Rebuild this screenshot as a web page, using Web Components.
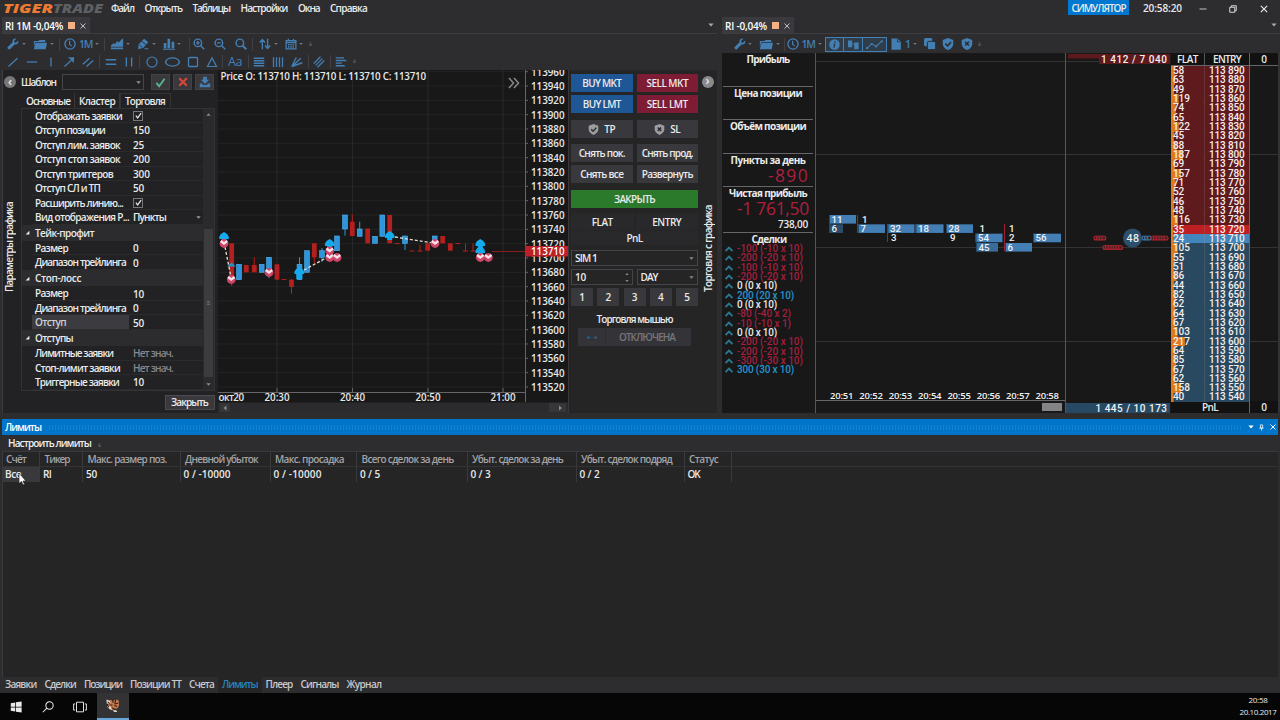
<!DOCTYPE html>
<html lang="ru">
<head>
<meta charset="utf-8">
<title>TigerTrade</title>
<style>
  html, body { margin: 0; height: 100%; overflow: hidden; }
  body {
    font: 600 10px/12px "Open Sans", "Noto Sans", sans-serif;
    color: #eaeaea;
    background: #2d2d30;
    --blue: #447fb4;
    --dark: #181818;
    --panel: #252526;
    --line: #3d3d41;
  }
</style>
</head>
<body>
<trade-app></trade-app>

<script>
const BASE = `<style>
  * { box-sizing: border-box; }
  :host { display: block; box-sizing: border-box; }
</style>`;

// Inline text whose tracking is adjusted so that it takes exactly w pixels
class FitText extends HTMLElement {
  constructor() {
    super();
    this.attachShadow({ mode: 'open' }).innerHTML = `
      <style>:host { display: inline-block; white-space: nowrap; flex: none; }</style><slot></slot>`;
  }
  connectedCallback() {
    const want = parseFloat(this.getAttribute('w'));
    const n = this.textContent.length;
    if (!want || !n) return;
    const vertical = getComputedStyle(this).writingMode !== 'horizontal-tb';
    const r = this.getBoundingClientRect();
    const now = vertical ? r.height : r.width;
    this.style.letterSpacing = ((want - now) / n).toFixed(3) + 'px';
  }
}
customElements.define('fit-text', FitText);
const fit = (w, s, cls = '') => `<fit-text class="${cls}" w="${w}">${s}</fit-text>`;

const ICONS = {
  wrench: '<path fill="currentColor" d="M14.8 3.4 12 6.2 9.8 5.9 9.6 3.8 12.4 1C9.8.2 6.6 2 7.4 5.7L1.3 11.6a2 2 0 0 0 2.9 2.9L10.1 8.5c3.6.9 5.8-2.2 4.7-5.1z"/>',
  folder: '<path fill="currentColor" d="M1 3h5L7.5 1.500H14v3H2.5L1 12zM2.800 5.500H16L14.500 15H1z"/>',
  clock: '<circle cx="8" cy="8" r="6.8" fill="none" stroke="currentColor" stroke-width="1.8"/><path d="M7.5 3.5v5l3 2" fill="none" stroke="currentColor" stroke-width="1.6"/>',
  area: '<path fill="currentColor" d="M1 10l3-3 2 1 2-4 2 2 4-5h1v10.5H1zM1 12.5h14V15H1z"/>',
  pencil: '<path fill="currentColor" d="M9.5 1 15 5.5 8.5 13l-7 2L2 8.5zM10 13.5h5V15h-5z"/><path d="M6.5 4.5l5.5 4.5M3 9l4 3.5" stroke="#2d2d30" stroke-width="1.2"/>',
  bars: '<path fill="currentColor" d="M1 6.5h3.5v7H1zM6 1h3.5v12.5H6zM11.5 5H15v8.5h-3.5zM0 14.2h16v1.3H0z"/>',
  zoomin: '<circle cx="6.5" cy="6.5" r="5" fill="none" stroke="currentColor" stroke-width="1.9"/><path d="M10 10l5 5M4 6.5h5M6.5 4v5" stroke="currentColor" stroke-width="1.9"/>',
  zoomout: '<circle cx="6.5" cy="6.5" r="5" fill="none" stroke="currentColor" stroke-width="1.9"/><path d="M10 10l5 5M4 6.5h5" stroke="currentColor" stroke-width="1.9"/>',
  zoom: '<circle cx="6.5" cy="6.5" r="5" fill="none" stroke="currentColor" stroke-width="1.9"/><path d="M10 10l5 5" stroke="currentColor" stroke-width="2.6"/>',
  updown: '<path d="M4.5 15V3M1 6l3.5-4L8 6M11.5 1v12M8 10l3.5 4 3.5-4" fill="none" stroke="currentColor" stroke-width="1.8"/>',
  calendar: '<path d="M1.5 3.5h13v11h-13zM4.5 1v3M11.5 1v3M1.5 6h13" fill="none" stroke="currentColor" stroke-width="1.7"/><path d="M4 9h8M4 12h8" stroke="currentColor" stroke-width="2" stroke-dasharray="2 1"/>',
  line: '<path d="M2 14 14 3" stroke="currentColor" stroke-width="1.6"/>',
  hline: '<path d="M1 8h14" stroke="currentColor" stroke-width="1.7"/>',
  vline: '<path d="M8 2v12" stroke="currentColor" stroke-width="1.7"/>',
  arrow: '<path d="M2 14 13 4" stroke="currentColor" stroke-width="1.6"/><path fill="currentColor" d="M6.5 2 15 1.5 14 10l-2.5-4.500z"/>',
  channel: '<path d="M1 11 10 3M6 14l9-8" stroke="currentColor" stroke-width="1.7"/>',
  hpar: '<path d="M1 5h14M1 11h14" stroke="currentColor" stroke-width="1.8"/>',
  vpar: '<path d="M4.5 2v12M11.5 2v12" stroke="currentColor" stroke-width="1.8"/>',
  circle: '<circle cx="8" cy="8" r="6.7" fill="none" stroke="currentColor" stroke-width="1.6"/>',
  ellipse: '<ellipse cx="8" cy="8" rx="7.3" ry="5.5" fill="none" stroke="currentColor" stroke-width="1.5"/>',
  square: '<rect x="2" y="2" width="12" height="12" rx="1" fill="none" stroke="currentColor" stroke-width="1.7"/>',
  triangle: '<path d="M8 2.5 14 14H2z" fill="none" stroke="currentColor" stroke-width="1.6"/>',
  hlines: '<path d="M1 3h14M1 6.3h14M1 9.6h14M1 13h14" stroke="currentColor" stroke-width="1.8"/>',
  vlines: '<path d="M2 1.5v13M6 1.5v13M10 1.5v13M14 1.5v13" stroke="currentColor" stroke-width="1.7"/>',
  fan: '<path d="M1 14 7 2M1 14 13 3M1 14l14-5" stroke="currentColor" stroke-width="1.8"/>',
  channel3: '<path d="M1 10 10 1M3.5 12.5l9-9M6 15l9-9" stroke="currentColor" stroke-width="1.7"/>',
  left: '<path d="M1 2.5h11M1 6h14M1 9.5h8M1 13h12" stroke="currentColor" stroke-width="1.8"/>',
  info: '<circle cx="8" cy="8" r="7.6" fill="currentColor"/><path d="M9 3 8.5 5M8.2 6.5 7.4 12.5" stroke="#2f3c49" stroke-width="2.2"/>',
  blocks: '<path fill="currentColor" d="M0 2h6v10H0zM9 5h6.5v10H9z"/><path d="M6 6h3v3H6z" fill="currentColor" opacity=".5"/>',
  trend: '<path d="M1 13 5.5 7l4 4L15 3" fill="none" stroke="currentColor" stroke-width="1.2"/><path fill="currentColor" d="M0 12h2v2.5H0zM4.5 6h2v2.5h-2zM8.5 9.5h2V12h-2zM14 2h2v2.5h-2z"/>',
  page: '<path fill="currentColor" d="M2 .5h8L14.5 5v10.5H2z"/><path d="M10 1v4h4" fill="none" stroke="#2d2d30"/>',
  copy: '<rect x="0" y="0" width="11" height="11" rx="2" fill="currentColor"/><rect x="4.5" y="4.5" width="11" height="11" rx="2" fill="currentColor" stroke="#2d2d30" stroke-width="1.3"/>',
  shieldok: '<path fill="currentColor" d="M8 0l7 2.5v6C14.5 12 11.5 14.5 8 16 4.5 14.5 1.5 12 1 8.5v-6z"/><path d="M4.5 7.5l3 3 4.500-5" fill="none" stroke="#2d2d30" stroke-width="2"/>',
  shieldx: '<path fill="currentColor" d="M8 0l7 2.5v6C14.5 12 11.5 14.5 8 16 4.5 14.5 1.5 12 1 8.5v-6z"/><path d="M5.5 5l5 5M10.5 5l-5 5" stroke="#2d2d30" stroke-width="2.2"/>',
  caret: '<path fill="currentColor" d="M1 4h14L8 12z"/>',
  caretup: '<path fill="currentColor" d="M1 12h14L8 4z"/>',
  cross: '<path d="M3 3l10 10M13 3 3 13" stroke="currentColor" stroke-width="1.9"/>',
  check: '<path d="M2 8.5 6 13.5 14 2.5" fill="none" stroke="currentColor" stroke-width="2.7"/>',
  redx: '<path d="M2 2l12 12M14 2 2 14" stroke="#d8453a" stroke-width="3.6"/>',
  download: '<path fill="currentColor" d="M5.5 1h5v4H13.5L8 10.5 2.5 5h3zM1 10h3l1.5 2h5l1.5-2h3v5H1z"/>',
  min: '<path d="M1 8h14" stroke="currentColor" stroke-width="1.6"/>',
  restore: '<path d="M1.5 4.5h10v10h-10zM4.5 4V1.5h10v10H12" fill="none" stroke="currentColor" stroke-width="1.8"/>',
  pin: '<path d="M5.5 2h5v7h-5zM3 9.5h10M8 10v5" fill="none" stroke="currentColor" stroke-width="1.7"/>',
  overflow: '<path fill="currentColor" d="M4 2h8v2H4zM3 8h10l-5 5z"/>',
  win: '<path fill="currentColor" d="M1 3l6-1v5.5H1zM8 1.8 15.5.7v6.8H8zM1 8.5h6V14l-6-1zM8 8.5h7.5v6.8L8 14.2z"/>',
  search: '<circle cx="10" cy="6" r="4.9" fill="none" stroke="currentColor" stroke-width="1.4"/><path d="M6.5 9.5 1 15" stroke="currentColor" stroke-width="1.4"/>',
  task: '<path d="M4 2.5h8v11H4zM2.5 4.5H.7v7h1.8M13.5 4.5h1.8v7h-1.8" fill="none" stroke="currentColor" stroke-width="1.1"/>',
  eyes: '<path fill="#27648f" d="M1 8l3-3v2h2v2H4v2zM15 8l-3-3v2h-2v2h2v2z"/>',
  tiger: '<path fill="#c9794a" d="M4 2.5 7 2l2 1 3-1.5 2.5 1L15 8l-1.5 3-3 .5L7 13l-4-3z"/><path d="M1.5 1.5 5 3l1 2.5-4 1zM2 8.5l4 .5 2 3.5-3-.5zM8 13h4l1 2h-3z" fill="#e6dac8"/><path d="M7.5 2l1.5 3M11.5 2l-1 3.5M14 5.5l-4 1M3 4l2 2M13 9l-3-1M5 7.5h3M7 10.5l3 1M2 6l2 4" stroke="#2b211c" stroke-width="1.1"/>',
  collapse: '<path fill="currentColor" d="M14 2v12H2z"/>'
};

const STRETCHED = ['folder', 'area', 'ellipse', 'trend'];

class UiIcon extends HTMLElement {
  constructor() {
    super();
    const s = this.getAttribute('size') || 11;
    const w = this.getAttribute('wide') || s;
    this.attachShadow({ mode: 'open' }).innerHTML = `
      <style>:host { display: inline-block; flex: none; width: ${w}px; height: ${s}px; } svg { display: block; }</style>
      <svg width="${w}" height="${s}" viewBox="0 0 16 16" preserveAspectRatio="${w === s ? 'xMidYMid' : 'none'}">${ICONS[this.getAttribute('name')]}</svg>`;
  }
}
customElements.define('ui-icon', UiIcon);
const icon = (name, size = 11, wide = '') => `<ui-icon name="${name}" size="${size}"${wide ? ` wide="${wide}"` : ''}></ui-icon>`;

// items: [kind, centre x, width]; the gaps between them are worked out here
function strip(start, items) {
  let cursor = start;
  return items.map(([kind, cx, w = 11, extra]) => {
    const gap = cx - w / 2 - cursor;
    cursor = cx + w / 2;
    let body;
    if (kind === '|') body = '<i class="sep"></i>';
    else if (kind === 'text') body = fit(w, extra, 'label');
    else if (kind === 'v') body = icon('caret', 4);
    else body = icon(kind, extra || 12, STRETCHED.includes(kind) ? Math.min(w, 17) : '');
    return `<span class="it ${kind}" style="margin-left:${gap}px;width:${w}px">${body}</span>`;
  }).join('');
}
const STRIP_CSS = `
  .strip { display: flex; align-items: center; height: 18px; color: var(--blue); }
  .it { flex: none; display: flex; align-items: center; justify-content: center; }
  .sep { width: 1px; height: 13px; background: #414145; }
  .v, .overflow { color: #77797d; }
  .text { font-size: 10.5px; }
`;

class AppHeader extends HTMLElement {
  constructor() {
    super();
    this.attachShadow({ mode: 'open' }).innerHTML = BASE + `
      <style>
        :host { display: flex; height: 17px; align-items: flex-start; padding-left: 3px; }
        nav { display: flex; margin-left: 4px; padding-top: 2px; gap: 10.5px; }
        .sim { margin-left: auto; background: #0078cf; height: 15px; padding: 2px 3.5px; width: 61px; }
        .time { margin: 2px 17px 0 14px; }
        .win { display: flex; align-items: center; gap: 22px; height: 17px; padding-right: 11px; }
      </style>
      <svg width="104" height="17" font-family="Open Sans" font-weight="800" font-style="italic" font-size="12.5">
        <text x="0" y="12.8" fill="#ee7a32" textLength="50" lengthAdjust="spacingAndGlyphs">TIGER</text>
        <text x="50" y="12.8" fill="#5f6062" textLength="50" lengthAdjust="spacingAndGlyphs">TRADE</text>
      </svg>
      <nav>${[['Файл', 23], ['Открыть', 37.5], ['Таблицы', 37.5], ['Настройки', 47], ['Окна', 21.5], ['Справка', 37]]
        .map(([t, w]) => fit(w, t)).join('')}</nav>
      <div class="sim">${fit(54, 'СИМУЛЯТОР')}</div>
      <div class="time">${fit(39, '20:58:20')}</div>
      <div class="win">${icon('min', 8)}${icon('restore', 8)}${icon('cross', 10)}</div>`;
  }
}
customElements.define('app-header', AppHeader);

// Document window: tab row, rule below it, then whatever is slotted
class DockWindow extends HTMLElement {
  constructor() {
    super();
    this.attachShadow({ mode: 'open' }).innerHTML = BASE + `
      <style>
        :host { display: flex; flex-direction: column; }
        header { display: flex; justify-content: space-between; align-items: center; height: 17px; flex: none;
          border-bottom: 1px solid var(--line); padding-right: 3px; color: #aaa; }
        .tab { display: flex; align-items: center; height: 16px; background: #3a3a3e; color: #fff; padding: 1px 3px 0 3px; gap: 4.5px; }
        .tab ui-icon { color: #c4c4c6; }
        .dot { width: 7px; height: 7px; background: #f5b183; }
        .body { flex: 1; min-height: 0; display: flex; flex-direction: column; }
      </style>
      <header>
        <div class="tab">${fit(this.getAttribute('tw'), this.getAttribute('title-text'))}<i class="dot"></i>${icon('cross', 8)}</div>
        ${icon('caret', 6)}
      </header>
      <div class="body"><slot></slot></div>`;
  }
}
customElements.define('dock-window', DockWindow);

class ChartTools extends HTMLElement {
  constructor() {
    super();
    this.attachShadow({ mode: 'open' }).innerHTML = BASE + `
      <style>${STRIP_CSS} :host { height: 36px; flex: none; padding-top: 1px; } .second { height: 17.5px; }</style>
      <div class="strip">${strip(2, [['wrench', 13], ['v', 23.5, 5], ['folder', 39.5, 14, 11], ['v', 51.5, 5], ['|', 59, 1], ['clock', 70],
        ['text', 85.5, 13, '1M'], ['v', 97, 5], ['|', 104.5, 1], ['area', 117, 14, 12], ['v', 128, 5], ['pencil', 143], ['v', 153.5, 5],
        ['bars', 168.5, 12], ['v', 179, 5], ['|', 189, 1], ['zoomin', 198.5, 12], ['zoomout', 220, 12], ['zoom', 241, 12], ['|', 252, 1],
        ['updown', 265, 12], ['v', 276, 5], ['calendar', 291, 12], ['v', 301, 5], ['overflow', 310, 5, 5]])}</div>
      <div class="strip second">${strip(2, [['line', 13], ['hline', 32], ['vline', 50.5], ['arrow', 69, 12], ['channel', 88, 12], ['|', 99, 1],
        ['hpar', 110.5, 12], ['vpar', 129, 12], ['|', 139.5, 1], ['circle', 151.5, 12], ['ellipse', 172, 15], ['square', 192.5, 12], ['triangle', 211.5, 12],
        ['|', 222.5, 1], ['text', 235, 14, '<span style="font-size:12.5px;font-weight:400">Aa</span>'], ['|', 248.5, 1],
        ['hlines', 259, 12], ['vlines', 278, 12], ['fan', 297, 12], ['|', 308, 1], ['channel3', 318.5, 12], ['|', 330.5, 1], ['left', 341, 12], ['overflow', 354, 5, 5]])}</div>`;
  }
}
customElements.define('chart-tools', ChartTools);

const PROPS = [
  ['Отображать заявки', 87, true], ['Отступ позиции', 70, '150'], ['Отступ лим. заявок', 85, '25'], ['Отступ стоп заявок', 85, '200'],
  ['Отступ триггеров', 78, '300'], ['Отступ СЛ и ТП', 65, '50'], ['Расширить линию...', 88, true], ['Вид отображения P...', 94, 'Пункты', 'select'],
  ['Тейк-профит', 59], ['Размер', 33, '0'], ['Диапазон трейлинга', 91, '0'],
  ['Стоп-лосс', 46], ['Размер', 33, '10'], ['Диапазон трейлинга', 91, '0'], ['Отступ', 31, '50', 'active'],
  ['Отступы', 38], ['Лимитные заявки', 78, 'Нет знач.', 'none'], ['Стоп-лимит заявки', 85, 'Нет знач.', 'none'], ['Триггерные заявки', 84, '10']
];

class ChartParams extends HTMLElement {
  constructor() {
    super();
    const rows = PROPS.map(([name, w, val, kind = '']) => {
      if (val === undefined) return `<div class="group">${icon('collapse', 5)}${fit(w, name)}</div>`;
      let v = val === true ? `<span class="box">${icon('check', 7)}</span>`
        : /^\d/.test(val) ? fit(val.length * 5.6, val) : fit(kind === 'none' ? 40 : 33, val);
      if (kind === 'select') v += icon('caret', 5);
      return `<div class="row ${kind}"><div class="name">${fit(w, name)}</div><div class="val">${v}</div></div>`;
    }).join('');
    this.attachShadow({ mode: 'open' }).innerHTML = BASE + `
      <style>
        :host { display: flex; flex-direction: column; width: 216px; background: #222224; border-left: 1px solid var(--line); flex: none; padding-bottom: 4px; }
        .top { display: flex; align-items: center; height: 23px; padding: 1px 3px 0 1px; gap: 3px; flex: none; }
        .back { width: 12px; height: 12px; border-radius: 50%; background: #77777a; display: flex; align-items: center; justify-content: center; margin-right: 2px; font-size: 12px; line-height: 9px; padding-bottom: 2px; }
        .sel { width: 82px; height: 16px; border: 1px solid #454549; margin: 0 4px 0 3px; display: flex; align-items: center; justify-content: flex-end; padding-right: 2px; color: #999; }
        .btn { width: 19px; height: 16px; background: #39393d; border: 1px solid #424247; display: flex; align-items: center; justify-content: center; }
        .ok { color: #58b68b; } .dl { color: var(--blue); }
        .main { flex: 1; display: flex; min-height: 0; }
        .side { width: 18px; flex: none; display: flex; flex-direction: column; align-items: flex-start; padding-top: 109px; }
        .side fit-text { writing-mode: vertical-rl; transform: rotate(180deg); }
        .right { flex: 1; display: flex; flex-direction: column; }
        .tabs { display: flex; height: 15px; flex: none; }
        .tabs span { padding: 2px 0 0 5px; border-right: 1px solid #38383b; }
        .tabs .on { border: 1px solid #333336; border-bottom: 0; padding-top: 1px; }
        .grid { flex: 1; display: flex; border: 1px solid #333336; margin-right: 3px; margin-top: -.5px; }
        .rows { flex: 1; }
        .row { display: grid; grid-template-columns: 99px 1fr; height: 14.5px; padding-left: 10px; align-items: center; }
        .row > div { border-bottom: 1px solid #2b2b2e; height: 14.5px; }
        .name { padding: 1px 0 0 3px; overflow: hidden; }
        .val { padding: 1px 2px 0 2px; display: flex; align-items: center; justify-content: space-between; }
        .select ui-icon { color: #999; }
        .active .name { background: #3c3c40; color: #cfcfd2; width: 97px; }
        .none .val { color: #87878a; }
        .group { height: 16.4px; background: #2c2c2f; display: flex; align-items: center; padding-left: 3px; gap: 5px; }
        .box { width: 10px; height: 10px; border: 1px solid #77777a; display: flex; align-items: center; justify-content: center; }
        .bar { width: 11px; background: #2a2a2c; display: flex; flex-direction: column; align-items: center; justify-content: space-between; padding: 3px 0; color: #8a8a8d; }
        .thumb { margin-top: 107px; width: 9px; height: 148px; background: #3c3c3f; display: flex; align-items: center; justify-content: center; font-size: 6px; }
        .foot { display: flex; justify-content: flex-end; padding: 4px 3px 0 0; height: 19px; flex: none; }
        .close { width: 50px; height: 15px; background: #39393d; border: 1px solid #4a4a4f; padding: 0 5px; }
      </style>
      <div class="top"><span class="back">‹</span>${fit(35, 'Шаблон')}<span class="sel">${icon('caret', 5)}</span>
        <span class="btn ok">${icon('check', 11)}</span><span class="btn">${icon('redx', 10)}</span><span class="btn dl">${icon('download', 12)}</span></div>
      <div class="main">
        <div class="side">${fit(90, 'Параметры графика')}</div>
        <div class="right">
          <div class="tabs"><span style="width:54px">${fit(44, 'Основные')}</span><span style="width:45px;padding-left:4px">${fit(36, 'Кластер')}</span><span class="on" style="width:51px;padding-left:4px">${fit(40, 'Торговля')}</span></div>
          <div class="grid"><div class="rows">${rows}</div><div class="bar">${icon('caretup', 5)}<span class="thumb">≡</span>${icon('caret', 5)}</div></div>
          <div class="foot"><span class="close">${fit(37, 'Закрыть')}</span></div>
        </div>
      </div>`;
  }
}
customElements.define('chart-params', ChartParams);

const UP = '#2e95dd', DOWN = '#b3201f';
// centre x, body top, body bottom, colour, wick top, wick bottom
const CANDLES = [
  [231.7, 243.3, 281, DOWN, 243, 286], [239, 264.3, 279.7, UP], [246.3, 265, 272.3, DOWN], [254.3, 265, 272.3, DOWN, 257.3, 272],
  [261.7, 264.3, 272.3, UP], [269, 257.3, 272.3, UP, 257, 278], [277, 264.3, 279.7, DOWN], [284, 279, 280, DOWN],
  [291.5, 279.7, 287, DOWN, 279, 293.7], [299.5, 264.3, 279.7, UP, 257.3, 279], [307, 250.7, 272.3, UP], [314.3, 243.3, 257.3, DOWN, 243, 265],
  [322, 250.7, 257.3, UP, 248, 262], [337, 236, 250.7, UP], [345, 215, 229, UP, 215, 235.7], [352.3, 221.7, 236, DOWN, 214.5, 236],
  [359.7, 229, 236.3, UP, 221.7, 236], [367.7, 228.5, 243.3, DOWN], [375, 236.3, 243.3, UP], [382.3, 215, 236.3, UP], [389.7, 215, 243.3, DOWN],
  [397.3, 243, 244, DOWN], [405, 236, 243.3, UP, 236, 250], [412, 250.5, 251.5, DOWN], [420, 250.5, 251.5, DOWN, 245, 251],
  [427.7, 243.3, 250.7, DOWN], [434.7, 236, 242, UP], [442.7, 236, 243.3, DOWN], [450.3, 243.3, 250.7, DOWN], [458, 243, 244, DOWN],
  [465.5, 250.5, 251.5, DOWN, 243.5, 251], [473, 250.5, 251.5, DOWN, 243.5, 251]
];
const BUYS = [[224, 237.5], [299.3, 272.5], [329.7, 244.5], [389.7, 236.5], [480.3, 244.5], [480.3, 251.5]];
const SELLS = [[224, 243.5], [231.3, 279.5], [269, 272.5], [329.7, 251], [329.7, 257.5], [337, 257.5], [435, 243.5], [480.3, 257.5], [488.3, 257.5]];

class PriceChart extends HTMLElement {
  constructor() {
    super();
    let grid = '', axis = '';
    for (let i = 0; i < 23; i++) {
      const y = 71.2 + i * 14.33;
      grid += `<path d="M218 ${y + .5}H525" stroke="#242424"/><path d="M525 ${y + .5}h3" stroke="#66666a"/>`;
      axis += `<text x="531" y="${y + 4.6}" textLength="33.5">${113960 - i * 20}</text>`;
    }
    const xs = [[277, '20:30'], [352.5, '20:40'], [428, '20:50'], [503, '21:00']];
    xs.forEach(([x, t]) => {
      grid += `<path d="M${x} 70V392" stroke="#282828"/><path d="M${x} 388v4" stroke="#66666a"/>`;
      axis += `<text x="${x - 12.5}" y="401" textLength="25">${t}</text>`;
    });
    const candles = CANDLES.map(([x, a, b, c, wa, wb]) =>
      (wa ? `<path d="M${x} ${wa}V${wb}" stroke="${c}"/>` : '') +
      `<rect x="${x - 2.4}" y="${a}" width="4.8" height="${b - a}" fill="${c}" ${c === UP ? 'stroke="#52b4ef" stroke-width=".6"' : ''}/>`).join('');
    const buys = BUYS.map(([x, y]) => `<path transform="translate(${x} ${y})" d="M0-5.5Q4.5-3.5 5 .5L4.5 1.5H2.5V3.5H-2.5V1.5H-4.5L-5 .5Q-4.5-3.5 0-5.5Z" fill="#15a9ee"/>`).join('');
    const sells = SELLS.map(([x, y]) => `<g transform="translate(${x} ${y})"><circle r="4.4" fill="#cf4569"/><path d="M-4-1.5-2.5-3.5 0-1.5 2.5-3.5 4-1.5 0 1.5Z" fill="#f6e3e8"/></g>`).join('');
    this.attachShadow({ mode: 'open' }).innerHTML = BASE + `
      <style>
        :host { width: 350px; background: var(--dark); flex: none; }
        svg { display: block; }
      </style>
      <svg width="350" height="343" viewBox="218 70 350 343" fill="#e8e8e8" font-size="9.8">
        ${grid}
        <path d="M218 392.5H525.5M525.5 70V402" fill="none" stroke="#66666a"/>
        ${candles}
        <path d="M492 251.5H525" stroke="#8c1b1d"/>
        <path d="M227 266.5l4.5-4 4.5 4z" fill="#2f8fc4"/>
        <path d="M225 247 231 277M304 270 326 258M395 237 433 243" fill="none" stroke="#e5dcd6" stroke-width="1.3" stroke-dasharray="3 2"/>
        <path d="M299.3 266l5 6h-2v7h-6v-7h-2z" fill="#15a9ee"/>
        ${buys}${sells}
        <text x="220.5" y="80.3" textLength="205.5">Price O: 113710 H: 113710 L: 113710 C: 113710</text>
        <path d="M509 78l4.5 5-4.5 5M514 78l4.5 5-4.5 5" fill="none" stroke="#85858a" stroke-width="1.6"/>
        ${axis}
        <text x="218.5" y="401" textLength="25.5">окт20</text>
        <rect x="525" y="246" width="43" height="10.5" fill="#bd2027"/>
        <text x="531" y="255" textLength="33.5" fill="#fff">113710</text>
        <rect x="218" y="402.5" width="350" height="10.5" fill="#2b2b2e"/>
        <rect x="220" y="403" width="10" height="9" fill="#363639"/><rect x="549" y="403" width="17" height="9" fill="#363639"/>
        <path d="M226.5 405.5v5l-3-2.5zM559 405.5v5l3-2.5z" fill="#8a8a8d"/>
      </svg>`;
  }
}
customElements.define('price-chart', PriceChart);

class TradePanel extends HTMLElement {
  constructor() {
    super();
    this.attachShadow({ mode: 'open' }).innerHTML = BASE + `
      <style>
        :host { display: flex; flex: 1; background: var(--panel); border-left: 1px solid #38383b; }
        .form { width: 129px; padding: 4px 0 0 2px; display: flex; flex-direction: column; }
        .two { display: grid; grid-template-columns: 1fr 1fr; column-gap: 4px; }
        .b { height: 18px; background: #39393d; display: flex; align-items: center; justify-content: center; gap: 5px; }
        .buy { background: #1f5796; } .sell { background: #7d1c34; }
        .field { height: 16px; border: 1px solid #454549; display: flex; align-items: center; justify-content: space-between; padding: 0 3px; color: #eee; }
        .field ui-icon { color: #88888c; }
        .spin { display: flex; flex-direction: column; gap: 3px; }
        .quick { display: grid; grid-template-columns: repeat(5, 22px); justify-content: space-between; margin-top: 3px; }
        .shield { color: #9c9da0; display: contents; }
        .muted { background: #29292b; }
        .off { margin: 2px 7px 0; background: #343438; height: 18px; display: flex; align-items: center; color: #77777b; }
        .off i { width: 28px; display: flex; justify-content: center; align-items: center; height: 18px; border-right: 1px solid #2d2d31; }
        .side { flex: 1; display: flex; flex-direction: column; align-items: center; padding-top: 6px; }
        .side fit-text { writing-mode: vertical-rl; transform: rotate(180deg); margin-top: 117px; }
        .go { width: 12px; height: 12px; border-radius: 50%; background: #8a8a8d; font-size: 12px; line-height: 10px; text-align: center; }
      </style>
      <div class="form">
        <div class="two" style="row-gap:3px">
          <div class="b buy">${fit(39, 'BUY MKT')}</div><div class="b sell">${fit(41.5, 'SELL MKT')}</div>
          <div class="b buy">${fit(38, 'BUY LMT')}</div><div class="b sell">${fit(41, 'SELL LMT')}</div>
        </div>
        <div class="two" style="margin-top:7px">
          <div class="b"><span class="shield">${icon('shieldok', 11)}</span>${fit(11, 'TP')}</div><div class="b"><span class="shield">${icon('shieldx', 11)}</span>${fit(10, 'SL')}</div>
        </div>
        <div class="two" style="margin-top:6px;row-gap:3px">
          <div class="b">${fit(46, 'Снять пок.')}</div><div class="b">${fit(51, 'Снять прод.')}</div>
          <div class="b">${fit(43, 'Снять все')}</div><div class="b">${fit(51, 'Развернуть')}</div>
        </div>
        <div class="b" style="margin-top:7px;background:#2b7a2c">${fit(41, 'ЗАКРЫТЬ')}</div>
        <div class="two" style="margin-top:5px;column-gap:2px"><div class="b muted" style="height:17px">${fit(21, 'FLAT')}</div><div class="b muted" style="height:17px">${fit(29, 'ENTRY')}</div></div>
        <div class="b muted" style="height:14px;margin-top:1px">${fit(16, 'PnL')}</div>
        <div class="field" style="margin-top:5px">${fit(22, 'SIM 1')}${icon('caret', 5)}</div>
        <div class="two" style="margin-top:3px">
          <div class="field">${fit(11, '10')}<span class="spin">${icon('caretup', 4)}${icon('caret', 4)}</span></div>
          <div class="field">${fit(17, 'DAY')}${icon('caret', 5)}</div>
        </div>
        <div class="quick">${[1, 2, 3, 4, 5].map(n => `<div class="b">${n}</div>`).join('')}</div>
        <div style="text-align:center;margin-top:7px;height:13px">${fit(76, 'Торговля мышью')}</div>
        <div class="off"><i>${icon('eyes', 9, 12)}</i><span style="padding-left:13px">${fit(56, 'ОТКЛЮЧЕНА')}</span></div>
      </div>
      <div class="side"><span class="go">›</span>${fit(87, 'Торговля с графика')}</div>`;
  }
}
customElements.define('trade-panel', TradePanel);

class ClusterTools extends HTMLElement {
  constructor() {
    super();
    this.attachShadow({ mode: 'open' }).innerHTML = BASE + `
      <style>
        ${STRIP_CSS}
        :host { height: 19px; flex: none; padding-top: 1px; }
        .info, .blocks, .trend { outline: 1px solid var(--blue); height: 13px; background: #2f3c49; }
      </style>
      <div class="strip">${strip(722, [['wrench', 739.5], ['v', 750, 5], ['folder', 765.5, 14, 11], ['v', 777.5, 5], ['|', 784, 1], ['clock', 793],
        ['text', 808, 13, '1M'], ['v', 819.5, 5], ['info', 834.7, 17, 11], ['blocks', 853.2, 18, 11], ['trend', 874.7, 23, 11],
        ['page', 896, 11], ['text', 907, 4, '1'], ['v', 915, 5], ['copy', 930], ['shieldok', 948.5], ['shieldx', 967.5], ['overflow', 980, 5, 5]])}</div>`;
  }
}
customElements.define('cluster-tools', ClusterTools);

const DEALS = [['-100 (-10 x 10)', 66], ['-200 (-20 x 10)', 66], ['-100 (-10 x 10)', 66], ['-200 (-20 x 10)', 66], ['0 (0 x 10)', 40],
  ['200 (20 x 10)', 57], ['0 (0 x 10)', 40], ['-80 (-40 x 2)', 54], ['-10 (-10 x 1)', 54], ['0 (0 x 10)', 40],
  ['-200 (-20 x 10)', 66], ['-200 (-20 x 10)', 66], ['-300 (-30 x 10)', 66], ['300 (30 x 10)', 57]];

class StatsColumn extends HTMLElement {
  constructor() {
    super();
    const deals = DEALS.map(([t, w]) => {
      const c = t[0] === '-' ? 'neg' : t[0] === '0' ? '' : 'pos';
      return `<div class="deal ${c}"><svg width="8" height="6" viewBox="0 0 8 6"><path d="M.5 5 4 1.5 7.5 5" fill="none" stroke="#2c7890" stroke-width="1.8"/></svg>${fit(w, t)}</div>`;
    }).join('');
    this.attachShadow({ mode: 'open' }).innerHTML = BASE + `
      <style>
        :host { width: 94px; background: var(--dark); border-right: 1px solid #55555a; flex: none; padding-left: 1px; }
        section { height: 33.5px; border-bottom: 1px solid #66666a; margin-right: 2px; text-align: center; font-weight: 700; }
        .num { text-align: right; font-weight: 400; font-size: 17.5px; line-height: 19px; color: #ad1f3f; padding-right: 4px; }
        .sub { text-align: right; font-weight: 600; line-height: 12px; padding-right: 5px; }
        h4 { margin: 0; font-size: 10px; line-height: 12px; text-align: center; }
        .deal { display: flex; align-items: center; gap: 4px; padding-left: 2px; height: 9.33px; font: 500 10px/10.2px Roboto, sans-serif; }
        .neg { color: #a51f3e; } .pos { color: #2394cf; }
      </style>
      <section>${fit(43, 'Прибыль')}</section>
      <section>${fit(68, 'Цена позиции')}</section>
      <section>${fit(76, 'Объём позиции')}</section>
      <section>${fit(75, 'Пункты за день')}<div class="num">${fit(41, '-890')}</div></section>
      <section style="height:45.5px">${fit(78, 'Чистая прибыль')}<div class="num">${fit(72, '-1 761,50')}</div><div class="sub">${fit(30, '738,00')}</div></section>
      <h4>${fit(35, 'Сделки')}</h4>
      ${deals}`;
  }
}
customElements.define('stats-column', StatsColumn);

// x, row, width (0 = plain text), volume, fill
const CELLS = [
  [829, 0, 27, 11, 1], [829, 1, 14, 6, 2], [858, 0, 0, 1], [858, 1, 27, 7, 1], [887.5, 1, 27, 32, 1], [887, 2, 0, 3], [915.5, 1, 28, 18, 1],
  [946, 1, 27, 28, 1], [946, 2, 0, 9], [975.5, 1, 0, 1], [975.5, 2, 27, 54, 1], [976, 3, 22, 45, 3], [1005, 1, 0, 1], [1005, 2, 0, 2], [1005, 3, 27, 6, 1], [1033, 2, 28, 56, 1]
];

class ClusterChart extends HTMLElement {
  constructor() {
    super();
    const fills = { 1: '#437fb5', 2: '#2b4d69', 3: '#3a6c9b' };
    const cells = CELLS.map(([x, r, w, v, f]) => {
      const y = 215 + r * 9.33;
      return (w ? `<rect x="${x}" y="${y}" width="${w}" height="8.6" fill="${fills[f]}"/><path d="M${x + .5} ${y}v8.6" stroke="#204867"/>` : '') +
        `<text x="${x + (w > 0 ? 2.5 : 4)}" y="${y + 7.7}" textLength="${v > 9 ? 11 : 5}">${v}</text>`;
    }).join('');
    const times = [51, 52, 53, 54, 55, 56, 57, 58].map((m, i) => `<text x="${830 + i * 29.35}" y="398.5" textLength="23.5">20:${m}</text>`).join('');
    const dots = (x0, x1, y, c) => {
      let s = '';
      for (let x = x0; x <= x1; x += 2.6) s += `<circle cx="${x}" cy="${y}" r="2" fill="#3a2326" stroke="${c}" stroke-width="1.2"/>`;
      return s;
    };
    this.attachShadow({ mode: 'open' }).innerHTML = BASE + `
      <style>:host { width: 355px; background: var(--dark); flex: none; } svg { display: block; }</style>
      <svg width="355" height="360" viewBox="816 53 355 360" fill="#f2f2f2">
        <path d="M816 61.5h355M816 154.5h355M816 247.5h355M816 341.5h355" stroke="#333335"/>
        <path d="M1065.5 53v360" stroke="#55555a"/>
        <path d="M816 400.5h249" stroke="#66666a"/>
        <g font-family="Roboto" font-weight="500" font-size="9.7">${cells}</g>
        <path d="M857.5 215v18M887.5 224v18M1004.5 224v27" stroke="#9b2231"/>
        <g font-size="9.5">${times}</g>
        <rect x="1042" y="403" width="20" height="8" fill="#848486"/>
        <rect x="1068" y="54" width="102" height="4.5" fill="#5d191b"/><rect x="1099" y="54" width="71" height="10" fill="#5d191b"/>
        <rect x="1066" y="403" width="104" height="10" fill="#274963"/>
        <g font-family="Roboto" font-weight="500" font-size="10">
          <text x="1101" y="62.8" textLength="66">1 412 / 7 040</text>
          <text x="1095.5" y="411.7" textLength="71.5">1 445 / 10 173</text>
        </g>
        ${dots(1096, 1104, 238, '#a8242d')}${dots(1105, 1122, 247.5, '#a8242d')}${dots(1144, 1151, 238, '#3b76a8')}${dots(1153, 1168, 238, '#a8242d')}
        <circle cx="1132.5" cy="238" r="9.5" fill="#2c4f6c"/>
        <text x="1126.5" y="241.7" font-size="10.5" textLength="12.5">48</text>
      </svg>`;
  }
}
customElements.define('cluster-chart', ClusterChart);

const VOLUMES = [58, 63, 49, 119, 74, 65, 122, 45, 88, 187, 69, 157, 71, 52, 46, 48, 116, 35, 24, 105, 55, 51, 86, 44, 82, 62, 64, 67, 103, 217, 64, 85, 67, 62, 158, 40];

class PriceLadder extends HTMLElement {
  constructor() {
    super();
    const rows = VOLUMES.map((v, i) => {
      const p = 113890 - i * 10;
      const cls = i < 17 ? 'ask' : i === 17 ? 'best-ask' : i === 18 ? 'best-bid' : 'bid';
      const bar = i === 17 || i === 18 ? 2 : v * .064;
      return `<div class="row ${cls}"><span class="vol" style="--v:${bar}px">${fit(String(v).length * 5.6, v)}</span><span class="price">${fit(35.5, '113 ' + (p % 1000))}</span></div>`;
    }).join('');
    this.attachShadow({ mode: 'open' }).innerHTML = BASE + `
      <style>
        :host { display: flex; flex: 1; background: var(--dark); }
        .main { width: 79px; border-right: 1px solid #66666a; }
        .head, .foot { display: flex; height: 13px; align-items: center; background: #121212; border-bottom: 1px solid #66666a; }
        .head span { flex: 1; text-align: center; }
        .head span:first-child { flex: 0 0 34px; border-right: 1px solid #55555a; }
        .foot { height: 11px; border: 0; justify-content: center; }
        .row { display: grid; grid-template-columns: 34px 1fr; height: 9.33px; font: 500 10px/9.8px Roboto, sans-serif; color: #f6eeee; }
        .row span { border-right: 1px solid rgba(150,150,150,.2); }
        .vol { padding-left: 2px; background: linear-gradient(#df7a1c, #df7a1c) 0 0 / var(--v) 100% no-repeat; white-space: nowrap; }
        .row .price { padding-left: 4px; border: 0; white-space: nowrap; }
        .ask { background-color: #5e1a1c; } .best-ask { background-color: #bd1f22; }
        .best-bid { background-color: #4385bd; } .bid { background-color: #28495f; }
        .zero { flex: 1; display: flex; flex-direction: column; justify-content: space-between; text-align: center; border-right: 2px solid #333336; }
        .zero div { height: 13px; line-height: 13px; background: #121212; border-bottom: 1px solid #66666a; }
        .zero .last { border: 0; height: 12px; line-height: 12px; }
        .mid { flex: 1; background: linear-gradient(#333335, #333335) 0 88px / 100% 1px no-repeat, linear-gradient(#333335, #333335) 0 181px / 100% 1px no-repeat, linear-gradient(#333335, #333335) 0 275px / 100% 1px no-repeat; }
      </style>
      <div class="main">
        <div class="head"><span>${fit(21, 'FLAT')}</span><span>${fit(28, 'ENTRY')}</span></div>
        ${rows}
        <div class="foot">${fit(16, 'PnL')}</div>
      </div>
      <div class="zero"><div>0</div><section class="mid"></section><div class="last">0</div></div>`;
  }
}
customElements.define('price-ladder', PriceLadder);

const COLS = [['Счёт', 20, 'Все', 16, 37], ['Тикер', 25, 'RI', 8, 43], ['Макс. размер поз.', 79, '50', 11, 97.5], ['Дневной убыток', 73, '0 / -10000', 47, 90],
  ['Макс. просадка', 69, '0 / -10000', 48, 86.5], ['Всего сделок за день', 92, '0 / 5', 20, 110.5], ['Убыт. сделок за день', 91, '0 / 3', 20, 109],
  ['Убыт. сделок подряд', 91, '0 / 2', 20, 108], ['Статус', 29, 'OK', 12, 47]];

class LimitsPanel extends HTMLElement {
  constructor() {
    super();
    this.attachShadow({ mode: 'open' }).innerHTML = BASE + `
      <style>
        :host { display: flex; flex-direction: column; margin: 0 2px; height: 258px; }
        .title { height: 16px; background: #0075c9; display: flex; align-items: center; padding: 0 1px 0 3px; flex: none; gap: 4px; color: #fff; }
        .dots { flex: 1; height: 5px; margin: 0 3px; background: radial-gradient(circle, #1f8bd6 .6px, transparent 1px) 0 0 / 3px 2.5px; }
        .bar { height: 16px; display: flex; align-items: center; padding-left: 6px; gap: 6px; color: #eee; flex: none; }
        .bar ui-icon { color: #77797d; margin-top: 4px; }
        .table { flex: 1; background: var(--panel); border-top: 1px solid #3a3a3d; border-left: 1px solid #3a3a3d; }
        .r { display: grid; grid-template-columns: ${COLS.map(c => c[4] + 'px').join(' ')}; height: 15px; }
        .r > div { border-right: 1px solid #3a3a3d; padding: 1px 0 0 3px; }
        .h { border-bottom: 1px solid #333336; color: #a3a3a6; }
        .h > div { padding-left: 4.5px; }
        .h > div:first-child { padding-left: 3px; }
        .r > .sel { background: #39393c; padding-left: 2px; }
      </style>
      <div class="title">${fit(36, 'Лимиты')}<i class="dots"></i>${icon('caret', 6)}${icon('pin', 7)}${icon('cross', 8)}</div>
      <div class="bar">${fit(83, 'Настроить лимиты')}${icon('overflow', 5)}</div>
      <div class="table">
        <div class="r h">${COLS.map(c => `<div>${fit(c[1], c[0])}</div>`).join('')}</div>
        <div class="r">${COLS.map((c, i) => `<div class="${i ? '' : 'sel'}">${fit(c[3], c[2])}</div>`).join('')}</div>
      </div>`;
  }
}
customElements.define('limits-panel', LimitsPanel);

class BottomTabs extends HTMLElement {
  constructor() {
    super();
    const tabs = [['Заявки', 31.5], ['Сделки', 31.5], ['Позиции', 38], ['Позиции ТТ', 51], ['Счета', 25], ['Лимиты', 35.5], ['Плеер', 27], ['Сигналы', 38], ['Журнал', 35]];
    this.attachShadow({ mode: 'open' }).innerHTML = BASE + `
      <style>
        :host { display: flex; height: 16px; padding-left: 1px; color: #c8c8ca; flex: none; }
        span { padding: 1px 4px 0; }
        .on { background: var(--panel); color: #2683bf; }
      </style>
      ${tabs.map(([t, w]) => `<span class="${t === 'Лимиты' ? 'on' : ''}">${fit(w, t)}</span>`).join('')}`;
  }
}
customElements.define('bottom-tabs', BottomTabs);

class TaskBar extends HTMLElement {
  constructor() {
    super();
    this.attachShadow({ mode: 'open' }).innerHTML = BASE + `
      <style>
        :host { display: flex; height: 27px; background: #060606; flex: none; }
        span { width: 32.2px; display: flex; align-items: center; justify-content: center; }
        .app { background: #333335; border-bottom: 2px solid #68a5d8; }
        .clock { margin-left: auto; padding-right: 3.5px; text-align: center; font-size: 8px; font-weight: 400; line-height: 12px; padding-top: 1px; }
        .clock fit-text { display: block; margin: 0 auto; width: max-content; }
      </style>
      <span>${icon('win', 12)}</span><span>${icon('search', 12)}</span><span>${icon('task', 14)}</span><span class="app">${icon('tiger', 15)}</span>
      <div class="clock">${fit(19, '20:58')}${fit(37, '20.10.2017')}</div>`;
  }
}
customElements.define('task-bar', TaskBar);

class TradeApp extends HTMLElement {
  constructor() {
    super();
    this.attachShadow({ mode: 'open' }).innerHTML = BASE + `
      <style>
        :host { display: flex; flex-direction: column; width: 1280px; height: 720px; overflow: hidden; }
        .work { display: flex; height: 396px; gap: 5px; margin-bottom: 6px; flex: none; }
        .one { width: 717px; padding-left: 2px; } .two { flex: 1; }
        .row { display: flex; flex: 1; min-height: 0; }
        .mouse { position: absolute; left: 18px; top: 472px; }
      </style>
      <app-header></app-header>
      <div class="work">
        <dock-window class="one" title-text="RI 1M -0,04%" tw="58">
          <chart-tools></chart-tools>
          <div class="row"><chart-params></chart-params><price-chart></price-chart><trade-panel></trade-panel></div>
        </dock-window>
        <dock-window class="two" title-text="RI -0,04%" tw="42">
          <cluster-tools></cluster-tools>
          <div class="row"><stats-column></stats-column><cluster-chart></cluster-chart><price-ladder></price-ladder></div>
        </dock-window>
      </div>
      <limits-panel></limits-panel>
      <bottom-tabs></bottom-tabs>
      <task-bar></task-bar>
      <svg class="mouse" width="9" height="14" viewBox="0 0 9 14"><path d="M1 1v10.5l2.5-2 1.5 3.5 1.5-.7L5 9h3z" fill="#fff" stroke="#222" stroke-width=".7"/></svg>`;
  }
}
customElements.define('trade-app', TradeApp);
</script>
</body>
</html>
